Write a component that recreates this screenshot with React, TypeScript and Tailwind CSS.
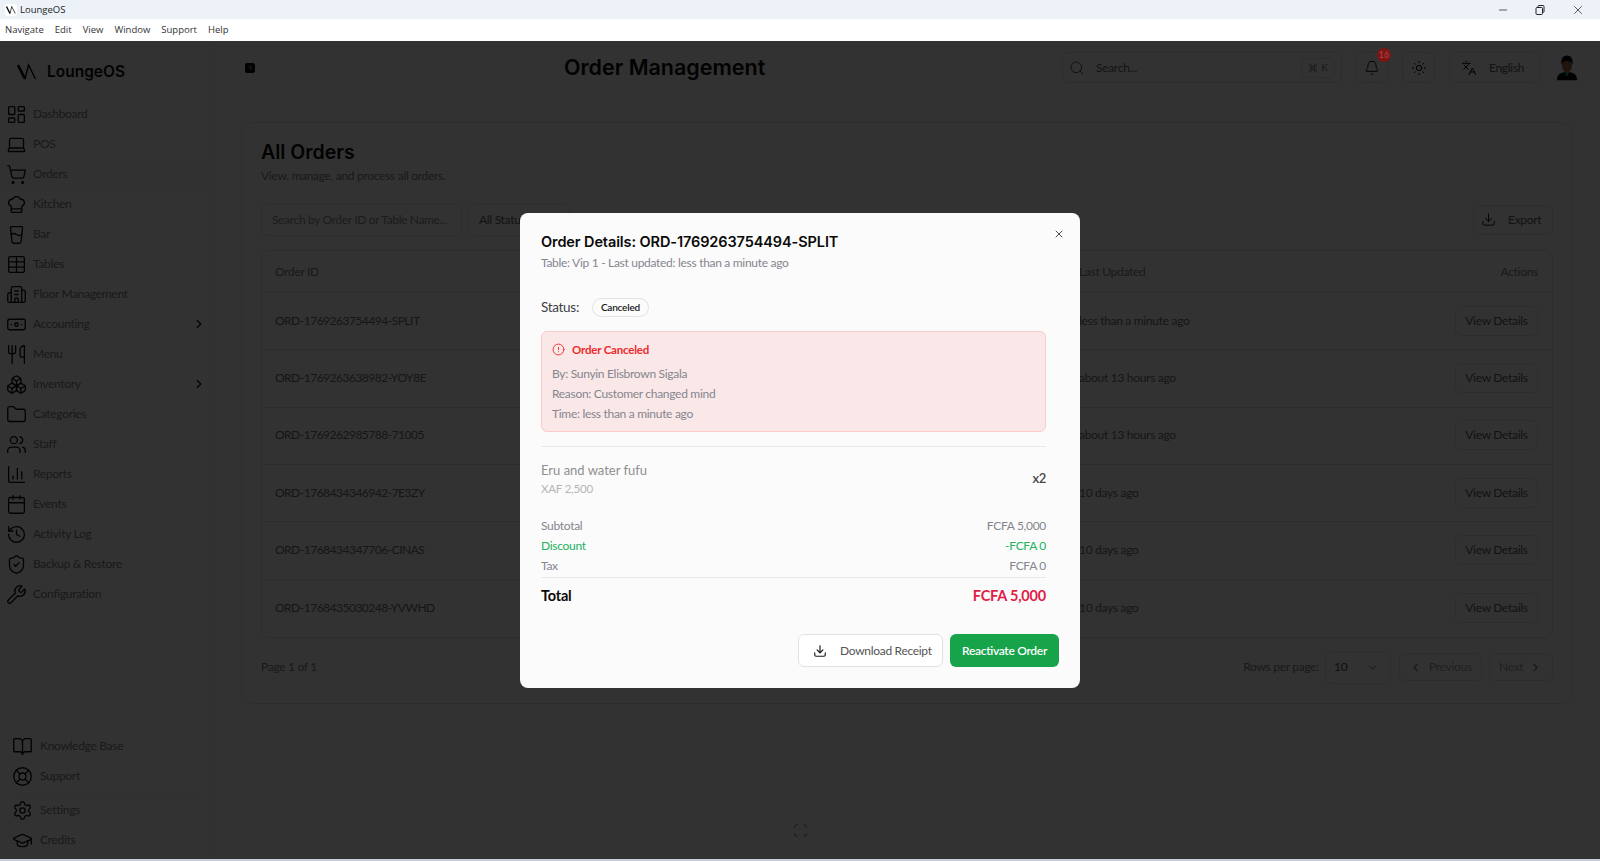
import {
  Banknote, Bell, BookOpen, Boxes, Building2, Calendar, ChartColumn, ChefHat, ChevronDown, ChevronLeft, ChevronRight,
  CircleAlert, Command, Download, Folder, GlassWater, GraduationCap, History, Languages, Laptop, LayoutDashboard,
  LifeBuoy, Minus, Scan, Search, Settings, ShieldCheck, ShoppingCart, Sun, Table, Users, Utensils, Wrench, X,
} from "lucide-react"

const navItems = [
  { label: "Dashboard", icon: LayoutDashboard },
  { label: "POS", icon: Laptop },
  { label: "Orders", icon: ShoppingCart, active: true },
  { label: "Kitchen", icon: ChefHat },
  { label: "Bar", icon: GlassWater },
  { label: "Tables", icon: Table },
  { label: "Floor Management", icon: Building2 },
  { label: "Accounting", icon: Banknote, more: true },
  { label: "Menu", icon: Utensils },
  { label: "Inventory", icon: Boxes, more: true },
  { label: "Categories", icon: Folder },
  { label: "Staff", icon: Users },
  { label: "Reports", icon: ChartColumn },
  { label: "Events", icon: Calendar },
  { label: "Activity Log", icon: History },
  { label: "Backup & Restore", icon: ShieldCheck },
  { label: "Configuration", icon: Wrench },
]

const orders = [
  { id: "ORD-1769263754494-SPLIT", updated: "less than a minute ago" },
  { id: "ORD-1769263638982-YOY8E", updated: "about 13 hours ago" },
  { id: "ORD-1769262985788-71005", updated: "about 13 hours ago" },
  { id: "ORD-1768434346942-7E3ZY", updated: "10 days ago" },
  { id: "ORD-1768434347706-CINAS", updated: "10 days ago" },
  { id: "ORD-1768435030248-YVWHD", updated: "10 days ago" },
]

const Logo = ({ size, className }: { size: number; className?: string }) => (
  <svg width={size} height={size} viewBox="0 0 20 20" fill="none" stroke="currentColor" className={className}>
    <path d="M1 3 L8 17" strokeWidth="2.6" />
    <path d="M8 17 L11.500 3 L18.500 17" strokeWidth="1.4" />
  </svg>
)

const Avatar = () => (
  <svg width="22" height="29" viewBox="0 0 24 30">
    <path d="M1 29 C1 22 6 20 12 20 C18 20 23 22 23 29 Z" fill="#0a0c0e" />
    <path d="M9 20 L12 25 L15 20 Z" fill="#2a8a8a" />
    <ellipse cx="12" cy="13" rx="5.500" ry="7.500" fill="#a06c48" />
    <path d="M6 12 C5 5 8 2 12 2 C16 2 19 5 18 12 C17 9 15 8 12 8 C9 8 7 9 6 12 Z" fill="#06080a" />
  </svg>
)

const App = () => {
  return (
    <div className="flex h-[861px] w-[1600px] flex-col overflow-hidden bg-white font-['Lato',sans-serif] text-[12px] tracking-[-0.3px] text-[#7c7c7c]">
      {/* Window chrome */}
      <div className="flex h-[19px] items-center justify-between bg-[#edf2f9] pl-[5px] pt-[1px] font-['Open_Sans',sans-serif] text-[9.500px] tracking-normal text-[#222]">
        <div className="flex items-center gap-[3px]">
          <div className="flex h-[12px] w-[12px] items-center justify-center rounded-[3px] bg-white text-black">
            <Logo size={10} />
          </div>
          <span>LoungeOS</span>
        </div>
        <div className="flex items-center gap-[25px] pr-[15px] text-[#222]">
          <Minus size={12} strokeWidth={1.5} />
          <svg width="12" height="12" viewBox="0 0 12 12" fill="none" stroke="currentColor">
            <rect x="2" y="3.500" width="6.500" height="7" rx="1" />
            <path d="M4 3.500 V2.500 Q4 1.500 5 1.500 H9 Q10 1.500 10 2.500 V7.500 Q10 8.500 8.500 8.500" />
          </svg>
          <X size={14} strokeWidth={1.25} />
        </div>
      </div>
      <div className="flex h-[22px] items-center gap-[11px] bg-white pl-[5px] font-['Open_Sans',sans-serif] text-[9.500px] tracking-normal text-[#333]">
        <span>Navigate</span>
        <span>Edit</span>
        <span>View</span>
        <span>Window</span>
        <span>Support</span>
        <span>Help</span>
      </div>

      <div className="relative flex min-h-0 flex-1 bg-[#fafafa]">
        {/* Sidebar */}
        <aside className="flex w-[214px] shrink-0 flex-col border-r border-[#f0f0f0] bg-[#fafafa]">
          <div className="flex h-[58px] items-center gap-[10px] pl-[17px] pt-[4px] text-[#0a0a0a]">
            <Logo size={20} />
            <span className="font-['Inter',sans-serif] text-[15.500px] font-semibold tracking-normal">LoungeOS</span>
          </div>
          <nav className="flex flex-col">
            {navItems.map((item) => (
              <div
                key={item.label}
                className={`flex h-[30px] items-center gap-[6px] pl-[6px] pr-[7px] ${item.active ? "rounded-md bg-[#f4f4f4]" : ""}`}
              >
                <item.icon size={21} strokeWidth={1.5} className="shrink-0 text-[#0a0a0a]" />
                <span className="flex-1">{item.label}</span>
                {item.more && <ChevronRight size={14} className="text-[#0a0a0a]" />}
              </div>
            ))}
          </nav>
          <div className="mt-auto flex flex-col pb-[4px] pl-[12px] pr-[14px]">
            {[
              { label: "Knowledge Base", icon: BookOpen },
              { label: "Support", icon: LifeBuoy },
            ].map((item) => (
              <div key={item.label} className="flex h-[30px] items-center gap-[7px]">
                <item.icon size={21} strokeWidth={1.5} className="shrink-0 text-[#0a0a0a]" />
                <span>{item.label}</span>
              </div>
            ))}
            <div className="my-[1.500px] border-t border-[#f0f0f0]" />
            {[
              { label: "Settings", icon: Settings },
              { label: "Credits", icon: GraduationCap },
            ].map((item) => (
              <div key={item.label} className="flex h-[30px] items-center gap-[7px]">
                <item.icon size={21} strokeWidth={1.5} className="shrink-0 text-[#0a0a0a]" />
                <span>{item.label}</span>
              </div>
            ))}
          </div>
        </aside>

        {/* Main */}
        <main className="relative min-w-0 flex-1 px-[27px]">
          <header className="mb-[39px] mt-[11px] flex h-[31px] items-center">
            <div className="ml-[4px] flex h-[10px] w-[10px] items-center justify-center rounded-[2px] bg-[#0a0a0a]">
              <ChevronLeft size={7} strokeWidth={3} className="text-[#fafafa]" />
            </div>
            <h1 className="ml-[309px] w-[200px] whitespace-nowrap font-['Inter',sans-serif] text-[21.500px] font-semibold tracking-normal text-[#0a0a0a]">
              Order Management
            </h1>
            <div className="ml-[298px] flex h-[31px] w-[280px] items-center rounded-md border border-[#e2e2e2] pl-[6px] pr-[6px]">
              <Search size={16} strokeWidth={1.5} className="text-[#525252]" />
              <span className="ml-[11px] flex-1 text-[#666]">Search...</span>
              <span className="flex h-[20px] w-[34px] items-center justify-center gap-[3px] rounded border border-[#e2e2e2] text-[10px]">
                <Command size={10} />K
              </span>
            </div>
            <div className="relative ml-[13px] flex h-[31px] w-[33px] items-center justify-center rounded-md border border-[#e2e2e2]">
              <Bell size={16} strokeWidth={1.5} className="text-[#0a0a0a]" />
            </div>
            <div className="ml-[14px] flex h-[31px] w-[33px] items-center justify-center rounded-md border border-[#e2e2e2]">
              <Sun size={16} strokeWidth={1.5} className="text-[#0a0a0a]" />
            </div>
            <div className="ml-[14px] flex h-[31px] w-[91px] items-center gap-[12px] rounded-md border border-[#e2e2e2] pl-[11px] text-[#5c5c5c]">
              <Languages size={16} strokeWidth={1.5} className="text-[#0a0a0a]" />
              <span>English</span>
            </div>
          </header>

          <section className="h-[582px] rounded-xl border border-[#e2e2e2] px-[19px] pt-[15px]">
            <h2 className="h-[28px] font-['Inter',sans-serif] text-[19.500px] font-semibold leading-[28px] tracking-normal text-[#0a0a0a]">All Orders</h2>
            <p className="mt-[1px] h-[18px] leading-[18px]">View, manage, and process all orders.</p>

            <div className="mt-[18px] flex h-[33px] items-center">
              <div className="flex h-[33px] w-[201px] items-center whitespace-nowrap rounded-md border border-[#e2e2e2] px-[10px] tracking-[-0.35px] text-[#8c8c8c]">
                Search by Order ID or Table Name...
              </div>
              <div className="ml-[6px] flex h-[33px] w-[102px] items-center rounded-md border border-[#e2e2e2] px-[10px] text-[#5c5c5c]">
                All Status
              </div>
              <div className="ml-auto flex h-[30px] w-[80px] items-center gap-[12px] rounded-md border border-[#e2e2e2] pl-[7px] text-[#5c5c5c]">
                <Download size={15} strokeWidth={1.5} className="text-[#0a0a0a]" />
                <span>Export</span>
              </div>
            </div>

            <div className="mt-[14px] rounded-lg border border-[#e2e2e2]">
              <div className="grid h-[42px] grid-cols-[804px_1fr_auto] items-center border-b border-[#e2e2e2] pl-[13px] pr-[14px]">
                <span>Order ID</span>
                <span>Last Updated</span>
                <span>Actions</span>
              </div>
              {orders.map((order, index) => (
                <div
                  key={order.id}
                  className={`grid h-[57.330px] grid-cols-[804px_1fr_auto] items-center pb-[1px] pl-[13px] pr-[14px] ${index < orders.length - 1 ? "border-b border-[#e2e2e2]" : ""}`}
                >
                  <span className="tracking-[-0.5px] text-[#6e6e6e]">{order.id}</span>
                  <span className="text-[#6e6e6e]">{order.updated}</span>
                  <span className="flex h-[30px] w-[83px] items-center justify-center rounded-md border border-[#e2e2e2] text-[#5c5c5c]">
                    View Details
                  </span>
                </div>
              ))}
            </div>

            <div className="mt-[13px] flex h-[33px] items-center">
              <span>Page 1 of 1</span>
              <span className="ml-auto">Rows per page:</span>
              <div className="ml-[6px] flex h-[33px] w-[66px] items-center justify-between rounded-md border border-[#e2e2e2] pl-[8px] pr-[11px] text-[#4a4a4a]">
                10
                <ChevronDown size={13} strokeWidth={1.5} />
              </div>
              <div className="ml-[8px] flex h-[28px] w-[83px] items-center gap-[7px] rounded-md border border-[#e2e2e2] pl-[9px] text-[#a0a0a0]">
                <ChevronLeft size={13} className="text-[#737373]" />
                Previous
              </div>
              <div className="ml-[7px] flex h-[28px] w-[64px] items-center gap-[6px] rounded-md border border-[#e2e2e2] pl-[9px] text-[#a0a0a0]">
                Next
                <ChevronRight size={13} className="text-[#737373]" />
              </div>
            </div>
          </section>

          {/* Corner control and avatar float over the page */}
          <div className="absolute bottom-[21px] left-[579px] text-[#737373]">
            <Scan size={15} strokeWidth={1.5} />
          </div>
          <div className="absolute right-[22px] top-[12px]">
            <Avatar />
          </div>
        </main>

        {/* Dialog overlay */}
        <div className="absolute inset-0 flex items-center justify-center bg-black/80">
          <div className="relative h-[475px] w-[560px] rounded-lg bg-[#fbfbfb] px-[21px] pt-[19px] text-[#85858e]">
            <button className="absolute right-[15px] top-[15px] text-[#333]">
              <X size={12} strokeWidth={1.75} />
            </button>
            <div className="pr-[13px]">
              <h3 className="h-[20px] whitespace-nowrap font-['Inter',sans-serif] text-[14.500px] font-semibold leading-[20px] tracking-[-0.1px] text-[#0a0a0a]">
                Order Details: ORD-1769263754494-SPLIT
              </h3>
              <p className="mt-[3px] h-[16px] leading-[16px]">Table: Vip 1 - Last updated: less than a minute ago</p>

              <div className="mt-[27px] flex h-[20px] items-center gap-[13px] text-[13.500px] text-[#3f3f46]">
                <span>Status:</span>
                <span className="flex h-[19px] w-[57px] items-center justify-center rounded-full border border-[#e2e2e2] text-[10px] font-semibold tracking-[-0.2px] text-[#18181b]">
                  Canceled
                </span>
              </div>

              <div className="mt-[13px] h-[101px] rounded-md border border-[#fbcaca] bg-[#fae8e8] px-[10px] pt-[8px]">
                <div className="flex h-[20px] items-center gap-[7px] text-[11.500px] font-bold tracking-[-0.2px] text-[#ef2b2b]">
                  <CircleAlert size={13} strokeWidth={1.75} />
                  <span>Order Canceled</span>
                </div>
                <div className="mt-[4px] leading-[20px]">
                  <p>By: Sunyin Elisbrown Sigala</p>
                  <p>Reason: Customer changed mind</p>
                  <p>Time: less than a minute ago</p>
                </div>
              </div>

              <div className="mt-[14px] border-t border-[#e8e8e8]" />

              <div className="mt-[13px] flex h-[37px] items-center justify-between">
                <div>
                  <p className="h-[20px] text-[13px] leading-[20px] tracking-normal text-[#8f8f8f]">Eru and water fufu</p>
                  <p className="h-[17px] text-[11.500px] leading-[17px] tracking-[-0.2px] text-[#b5b5b5]">XAF 2,500</p>
                </div>
                <span className="pt-[1px] text-[13px] font-semibold text-[#444]">x2</span>
              </div>

              <div className="mt-[19px] leading-[20px]">
                <div className="flex justify-between"><span>Subtotal</span><span>FCFA 5,000</span></div>
                <div className="flex justify-between text-[#22b35e]"><span>Discount</span><span>-FCFA 0</span></div>
                <div className="flex justify-between"><span>Tax</span><span>FCFA 0</span></div>
              </div>

              <div className="mt-[1px] border-t border-[#e8e8e8]" />

              <div className="mt-[6px] flex h-[24px] items-center justify-between text-[14.500px] font-bold tracking-[-0.2px] text-[#0a0a0a]">
                <span>Total</span>
                <span className="text-[#e11d48]">FCFA 5,000</span>
              </div>
            </div>

            <div className="mt-[26px] flex justify-end gap-[7px]">
              <button className="flex h-[33px] w-[145px] items-center gap-[13px] rounded-md border border-[#e2e2e2] bg-white pl-[14px] pt-[1px] text-[#555]">
                <Download size={14} strokeWidth={2} className="text-[#18181b]" />
                Download Receipt
              </button>
              <button className="flex h-[33px] w-[109px] items-center justify-center rounded-md bg-[#16a34a] pt-[1px] font-semibold text-white">
                Reactivate Order
              </button>
            </div>
          </div>

          <span className="absolute left-[1377px] top-[7px] flex h-[14px] w-[14px] items-center justify-center rounded-full bg-[#7f1414] text-[9px] tracking-normal text-[#a84a4a]">
            16
          </span>
        </div>
      </div>
      <div className="h-[2px] bg-[#c9ced6]" />
    </div>
  )
}

export default App
